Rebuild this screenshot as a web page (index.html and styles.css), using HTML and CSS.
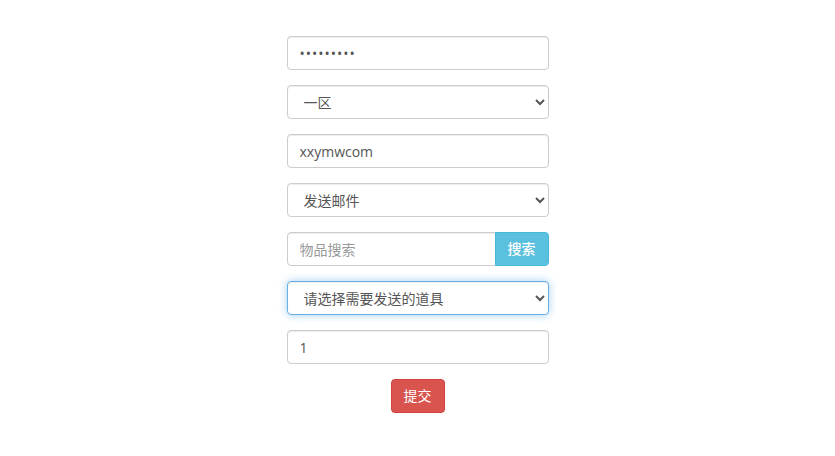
FILE: index.html
```html
<!DOCTYPE html>
<html lang="zh">
<head>
<meta charset="utf-8">
<title>邮件发送</title>
<link rel="stylesheet" href="styles.css">
</head>
<body>
<form class="form">
  <div class="group"><input class="control pwd" type="password" value="123456789"></div>
  <div class="group">
    <select class="control select">
      <option>一区</option>
    </select>
  </div>
  <div class="group"><input class="control" type="text" value="xxymwcom"></div>
  <div class="group">
    <select class="control select">
      <option>发送邮件</option>
    </select>
  </div>
  <div class="group input-group">
    <input class="control grow" type="text" placeholder="物品搜索">
    <button type="button" class="btn btn-info addon">搜索</button>
  </div>
  <div class="group">
    <select class="control select focus">
      <option>请选择需要发送的道具</option>
    </select>
  </div>
  <div class="group"><input class="control" type="text" value="1"></div>
  <div class="actions"><button type="button" class="btn btn-danger">提交</button></div>
</form>
</body>
</html>
```
FILE: styles.css
```css
html, body {
  margin: 0;
  padding: 0;
  background: #fff;
}
body {
  font-family: "Open Sans", "Noto Sans CJK SC", sans-serif;
  font-size: 14px;
  color: #555;
}
.form {
  width: 262px;
  margin: 36px auto 0;
}
.group {
  margin-bottom: 15px;
}
.control {
  display: block;
  box-sizing: border-box;
  width: 100%;
  height: 34px;
  padding: 6px 12px;
  font-family: "Open Sans", "Noto Sans CJK SC", sans-serif;
  font-size: 14px;
  line-height: 1.42857;
  color: #555;
  background: #fff;
  border: 1px solid #ccc;
  border-radius: 4px;
  box-shadow: inset 0 1px 1px rgba(0,0,0,.075);
  outline: none;
  margin: 0;
}
.control::placeholder {
  color: #999;
}
.pwd {
  letter-spacing: 1px;
}
.select {
  padding: 6px 8px 6px 12px;
}
.focus {
  border-color: #66afe9;
  box-shadow: inset 0 1px 1px rgba(0,0,0,.075), 0 0 8px rgba(102,175,233,.6);
}
.input-group {
  display: flex;
}
.grow {
  flex: 1;
  min-width: 0;
  border-top-right-radius: 0;
  border-bottom-right-radius: 0;
}
.btn {
  box-sizing: border-box;
  height: 34px;
  padding: 6px 12px;
  font-family: "Open Sans", "Noto Sans CJK SC", sans-serif;
  font-size: 14px;
  line-height: 1.42857;
  color: #fff;
  border: 1px solid transparent;
  border-radius: 4px;
  cursor: pointer;
}
.btn-info {
  background: #5bc0de;
  border-color: #46b8da;
}
.addon {
  width: 54px;
  padding: 6px 0;
  font-weight: 500;
  border-top-left-radius: 0;
  border-bottom-left-radius: 0;
  margin-left: -1px;
}
.btn-danger {
  background: #d9534f;
  border-color: #d43f3a;
  width: 54px;
  padding: 6px 0;
}
.actions {
  display: flex;
  justify-content: center;
}
```
